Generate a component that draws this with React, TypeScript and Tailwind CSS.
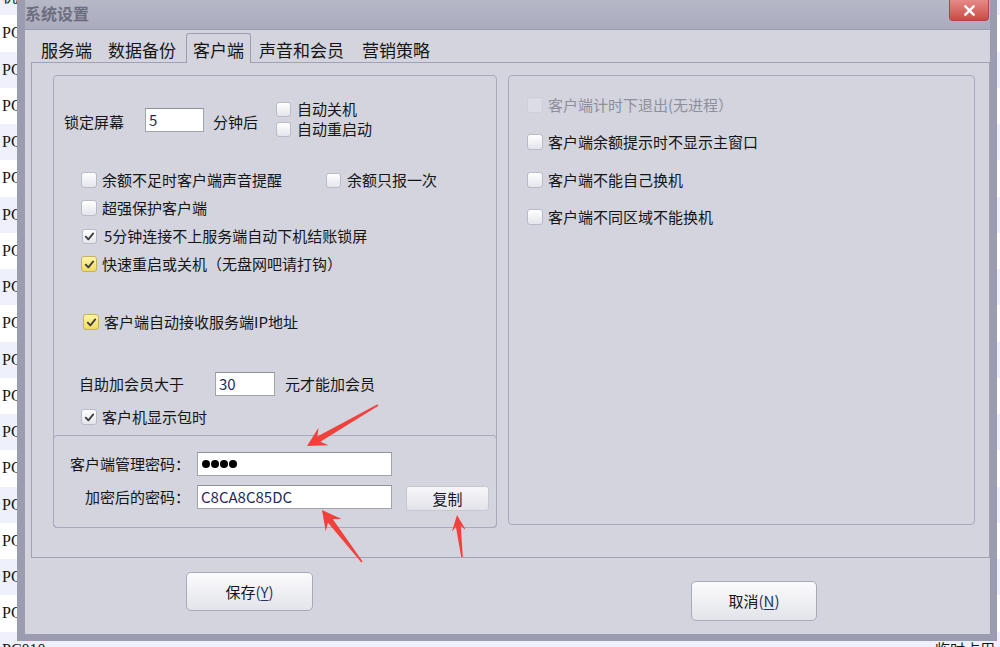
import clsx from "clsx";
import type { ReactNode } from "react";

type Tone = "plain" | "yellow" | "off";

const list = [
  { name: "机器名", state: "" },
  ...Array.from({ length: 17 }, (_, i) => ({ name: `PC0${String(i + 1).padStart(2, "0")}`, state: "" })),
  { name: "PC010", state: "临时占用" },
];

function Box({ checked = false, tone = "plain", size = 16 }: { checked?: boolean; tone?: Tone; size?: number }) {
  return (
    <span
      className={clsx(
        "flex shrink-0 items-center justify-center rounded-[3px] border",
        size === 16 ? "h-[16px] w-[16px]" : "h-[15px] w-[15px]",
        tone === "yellow" && "border-[#c4b35c] bg-linear-to-b from-[#fff5a8] to-[#f0da62]",
        tone === "plain" && "border-[#babbc7] bg-linear-to-b from-white to-[#e4e5ec]",
        tone === "off" && "border-[#cdced7] bg-[#dcdde4]"
      )}
    >
      {checked && (
        <svg viewBox="0 0 16 16" className="h-[13px] w-[13px]">
          <path d="M3.4 8.3 L6.6 11.6 L12.6 4.2" fill="none" stroke="#3b3b3b" strokeWidth="2.2" strokeLinecap="round" strokeLinejoin="round" />
        </svg>
      )}
    </span>
  );
}

function Check({ children, gap = "gap-[5px]", ...box }: { children: ReactNode; gap?: string; checked?: boolean; tone?: Tone; size?: number }) {
  return (
    <div className={clsx("flex h-[20px] items-center", gap)}>
      <Box {...box} />
      <span className={clsx("whitespace-nowrap leading-[20px]", box.tone === "off" && "text-[#8e8f9b]")}>{children}</span>
    </div>
  );
}

function Field({ className, children }: { className?: string; children?: ReactNode }) {
  return (
    <div className={clsx("flex h-[24px] items-center border border-[#a3a3ab] border-t-[#8f8f98] bg-white px-[3px] text-[15px] leading-[20px] text-[#1d2b5c]", className)}>
      {children}
    </div>
  );
}

function Btn({ label, hot }: { label: string; hot: string }) {
  return (
    <span>
      {label}
      <span className="text-[#26345f]">
        (<span className="underline underline-offset-2">{hot}</span>)
      </span>
    </span>
  );
}

function arrow(tx: number, ty: number, px: number, py: number, head = 19, wing = 10, neck = 3, tail = 0.8) {
  const dx = px - tx;
  const dy = py - ty;
  const len = Math.hypot(dx, dy);
  const ux = dx / len;
  const uy = dy / len;
  const at = (d: number, w: number) => [tx + ux * d - uy * w, ty + uy * d + ux * w];
  const pts = [at(0, tail), at(len - head * 0.72, neck), at(len - head, wing), [px, py], at(len - head, -wing), at(len - head * 0.72, -neck), at(0, -tail)];
  return pts.map((p) => p.map((n) => n.toFixed(1)).join(",")).join(" ");
}

export default function App() {
  return (
    <div className="relative h-[647px] w-[1000px] overflow-hidden bg-white font-['Noto_Sans_CJK_SC','Noto_Sans',sans-serif] text-[15px] text-[#151515]">
      {/* list behind the dialog */}
      <div className="-mt-[21px] flex flex-col">
        {list.map((r, i) => (
          <div key={i} className={clsx("flex h-[36.25px] shrink-0 items-center pl-[2px]", i % 2 ? "bg-white" : "bg-[#eef0fb]")}>
            <span className="w-[933px] whitespace-nowrap font-['Liberation_Serif',serif] text-[16px]">{r.name}</span>
            <span className="whitespace-nowrap text-[15px]">{r.state}</span>
          </div>
        ))}
      </div>

      {/* dialog */}
      <div className="absolute left-[17px] top-0 flex h-[641px] w-[980px] flex-col border-b-[7px] border-l-[8px] border-r-[7px] border-[#9b9caf] bg-[#d3d4de]">
        <div className="relative flex h-[30px] shrink-0 items-center border-b border-[#9a9bae] bg-linear-to-b from-[#b6b7c7] to-[#aaabbc] pb-[4px]">
          <span className="text-[16px] font-bold leading-[20px] text-[#6c6d7e]">系统设置</span>
          <div className="absolute right-[1px] top-0 flex h-[21px] w-[40px] items-center justify-center rounded-b-[4px] border border-t-0 border-[#b04644] bg-linear-to-b from-[#e68a87] to-[#c94a47]">
            <svg viewBox="0 0 14 12" className="h-[11px] w-[13px]">
              <path d="M2.5 1.5 L11.5 10.5 M11.5 1.5 L2.5 10.5" stroke="white" strokeWidth="2.6" strokeLinecap="round" />
            </svg>
          </div>
        </div>

        {/* tabs */}
        <div className="flex h-[32px] shrink-0 items-end pl-[16px] text-[17px] leading-[24px]">
          <span>服务端</span>
          <span className="ml-[16px]">数据备份</span>
          <span className="relative z-10 -mb-px ml-[10px] flex h-[30px] items-end rounded-t-[3px] border border-b-0 border-[#9c9db0] bg-[#d3d4de] px-[6px] pb-[1px]">客户端</span>
          <span className="ml-[8px]">声音和会员</span>
          <span className="ml-[18px]">营销策略</span>
        </div>

        <div className="ml-[6px] flex h-[496px] shrink-0 items-start gap-[11px] border border-[#a0a1b4] pl-[21px] pt-[12px]">
          {/* left group */}
          <div className="flex h-[453px] w-[444px] flex-col rounded-[4px] border border-[#a8a9bb]">
            <div className="mt-[23px] flex items-start pl-[10px]">
              <span className="mt-[13px] leading-[20px]">锁定屏幕</span>
              <Field className="ml-[21px] mt-[9px] w-[59px]">5</Field>
              <span className="ml-[9px] mt-[13px] leading-[20px]">分钟后</span>
              <div className="ml-[18px] flex flex-col">
                <Check size={15} gap="gap-[6px]">自动关机</Check>
                <Check size={15} gap="gap-[6px]">自动重启动</Check>
              </div>
            </div>

            <div className="mt-[31px] flex pl-[27px]">
              <Check>余额不足时客户端声音提醒</Check>
              <div className="ml-[44px]">
                <Check size={15} gap="gap-[6px]">余额只报一次</Check>
              </div>
            </div>
            <div className="mt-[8px] pl-[27px]">
              <Check>超强保护客户端</Check>
            </div>
            <div className="mt-[8px] pl-[28px]">
              <Check checked size={15} gap="gap-[7px]">5分钟连接不上服务端自动下机结账锁屏</Check>
            </div>
            <div className="mt-[8px] pl-[27px]">
              <Check checked tone="yellow">快速重启或关机（无盘网吧请打钩）</Check>
            </div>
            <div className="mt-[38px] pl-[29px]">
              <Check checked tone="yellow">客户端自动接收服务端IP地址</Check>
            </div>

            <div className="mt-[40px] flex h-[24px] items-center pl-[25px]">
              <span className="w-[105px] whitespace-nowrap leading-[20px]">自助加会员大于</span>
              <Field className="ml-[31px] w-[60px]">30</Field>
              <span className="ml-[10px] leading-[20px]">元才能加会员</span>
            </div>
            <div className="mt-[11px] pl-[27px]">
              <Check checked>客户机显示包时</Check>
            </div>

            {/* password group */}
            <div className="-mx-px -mb-px mt-auto flex h-[93px] flex-col rounded-[4px] border border-[#a8a9bb]">
              <div className="mt-[16px] flex items-center">
                <span className="w-[136px] whitespace-nowrap text-right leading-[20px]">客户端管理密码：</span>
                <Field className="ml-[7px] w-[195px] gap-[1px] pl-[4px]">
                  {[0, 1, 2, 3].map((d) => (
                    <span key={d} className="h-[8px] w-[8px] rounded-full bg-black" />
                  ))}
                </Field>
              </div>
              <div className="mt-[9px] flex items-start">
                <span className="mt-[2px] w-[136px] whitespace-nowrap text-right leading-[20px]">加密后的密码：</span>
                <Field className="ml-[7px] w-[195px]">C8CA8C85DC</Field>
                <button className="ml-[14px] mt-[1px] flex h-[25px] w-[83px] items-center justify-center rounded-[3px] border border-[#c7c8d1] bg-linear-to-b from-[#f7f7f9] to-[#e2e3e9] leading-[20px]">
                  复制
                </button>
              </div>
            </div>
          </div>

          {/* right group */}
          <div className="flex h-[450px] w-[467px] flex-col rounded-[4px] border border-[#a8a9bb] pl-[18px]">
            <div className="mt-[19px]">
              <Check tone="off">客户端计时下退出(无进程）</Check>
            </div>
            <div className="mt-[17px]">
              <Check>客户端余额提示时不显示主窗口</Check>
            </div>
            <div className="mt-[18px]">
              <Check>客户端不能自己换机</Check>
            </div>
            <div className="mt-[17px]">
              <Check>客户端不同区域不能换机</Check>
            </div>
          </div>
        </div>

        {/* footer buttons */}
        <div className="flex flex-1 items-start">
          <button className="ml-[161px] mt-[14px] flex h-[39px] w-[127px] items-center justify-center rounded-[5px] border border-[#a9aab9] bg-linear-to-b from-[#fbfbfd] to-[#e3e4ea] leading-[20px]">
            <Btn label="保存" hot="Y" />
          </button>
          <button className="ml-[378px] mt-[23px] flex h-[40px] w-[126px] items-center justify-center rounded-[5px] border border-[#a9aab9] bg-linear-to-b from-[#fbfbfd] to-[#e3e4ea] leading-[20px]">
            <Btn label="取消" hot="N" />
          </button>
        </div>
      </div>

      {/* red annotation arrows */}
      <svg className="pointer-events-none absolute left-0 top-0 h-[647px] w-[1000px]" viewBox="0 0 1000 647">
        <polygon points={arrow(378, 405, 307, 446)} fill="#f2403b" />
        <polygon points={arrow(362, 562, 322, 510)} fill="#f2403b" />
        <polygon points={arrow(462, 557, 457, 515, 16, 7, 2.5, 0.8)} fill="#f2403b" />
      </svg>
    </div>
  );
}
